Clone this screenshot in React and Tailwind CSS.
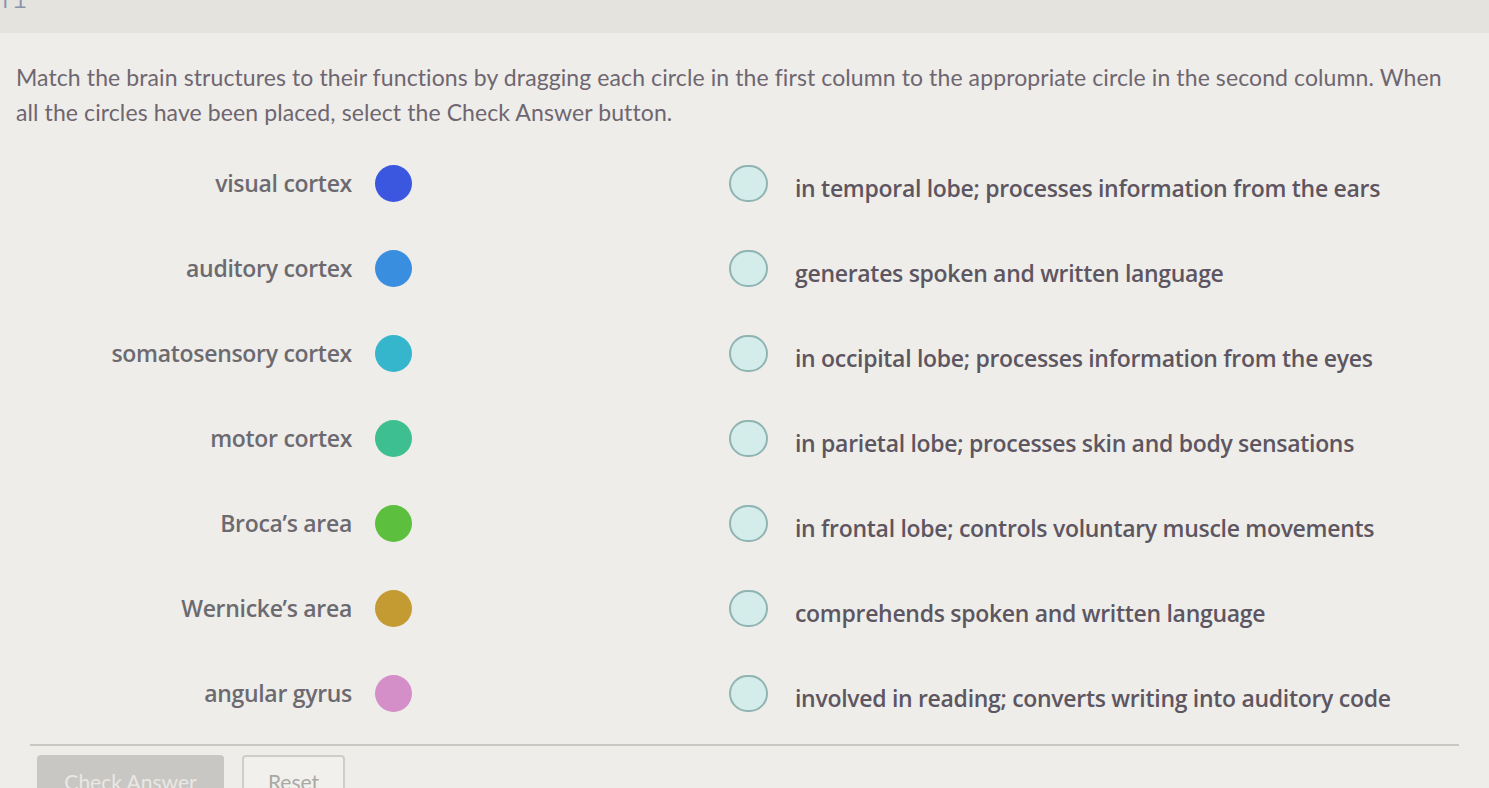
import React from "react";

const left = [
  ["visual cortex", "bg-[#3b57e0]"],
  ["auditory cortex", "bg-[#3a8ee0]"],
  ["somatosensory cortex", "bg-[#35b6cc]"],
  ["motor cortex", "bg-[#3ebf91]"],
  ["Broca\u2019s area", "bg-[#5cbf3e]"],
  ["Wernicke\u2019s area", "bg-[#c49a33]"],
  ["angular gyrus", "bg-[#d48ec8]"],
];

const right = [
  "in temporal lobe; processes information from the ears",
  "generates spoken and written language",
  "in occipital lobe; processes information from the eyes",
  "in parietal lobe; processes skin and body sensations",
  "in frontal lobe; controls voluntary muscle movements",
  "comprehends spoken and written language",
  "involved in reading; converts writing into auditory code",
];

const boldFont = { fontFamily: "'Open Sans', Lato, sans-serif" };

export default function App() {
  return (
    <div
      className="w-[1489px] h-[788px] overflow-hidden bg-[#eeede9] flex flex-col"
      style={{ fontFamily: "Lato, 'Open Sans', sans-serif" }}
    >
      <div className="h-[33px] bg-[#e5e3de] relative shrink-0">
        <span className="absolute left-[0px] top-[-14px] text-[22px] text-[#8a93ab]" style={{ fontFamily: "'Liberation Mono', monospace" }}>f1</span>
      </div>
      <div className="shrink-0 px-[16px] pt-[27px] pr-[40px] text-[23px] leading-[35px] text-[#6e6670] tracking-[0.1px]">
        Match the brain structures to their functions by dragging each circle in the first column to the appropriate circle in the second column. When all the circles have been placed, select the Check Answer button.
      </div>
      <div className="shrink-0 flex flex-col pt-[11px]">
        {left.map(([label, color], i) => (
          <div key={i} className="h-[85px] flex items-center">
            <div className="w-[352px] text-right text-[23px] font-semibold text-[#6c6a70] tracking-[-0.3px]" style={boldFont}>{label}</div>
            <div className={`ml-[23px] w-[37px] h-[37px] rounded-full ${color} shrink-0`} />
            <div className="ml-[317px] w-[39px] h-[37px] rounded-full bg-[#d4ecea] border-2 border-[#8fb4b2] shrink-0" />
            <div className="ml-[27px] mt-[10px] text-[23px] font-semibold text-[#5d5661] tracking-[-0.3px] whitespace-nowrap" style={boldFont}>{right[i]}</div>
          </div>
        ))}
      </div>
      <div className="shrink-0 mx-[30px] mt-[8px] h-[2px] bg-[#c9c7c2]" />
      <div className="shrink-0 flex gap-[18px] pl-[37px] pt-[9px]">
        <div className="w-[187px] h-[40px] rounded-t-[4px] bg-[#c9c7c3] text-[#e9e8e5] text-[21px] flex items-center justify-center pt-[14px]">
          Check Answer
        </div>
        <div className="w-[103px] h-[40px] rounded-t-[4px] bg-[#f1f0ec] border-2 border-[#cfcdc8] text-[#aaa8a4] text-[21px] flex items-center justify-center pt-[14px]">
          Reset
        </div>
      </div>
    </div>
  );
}
